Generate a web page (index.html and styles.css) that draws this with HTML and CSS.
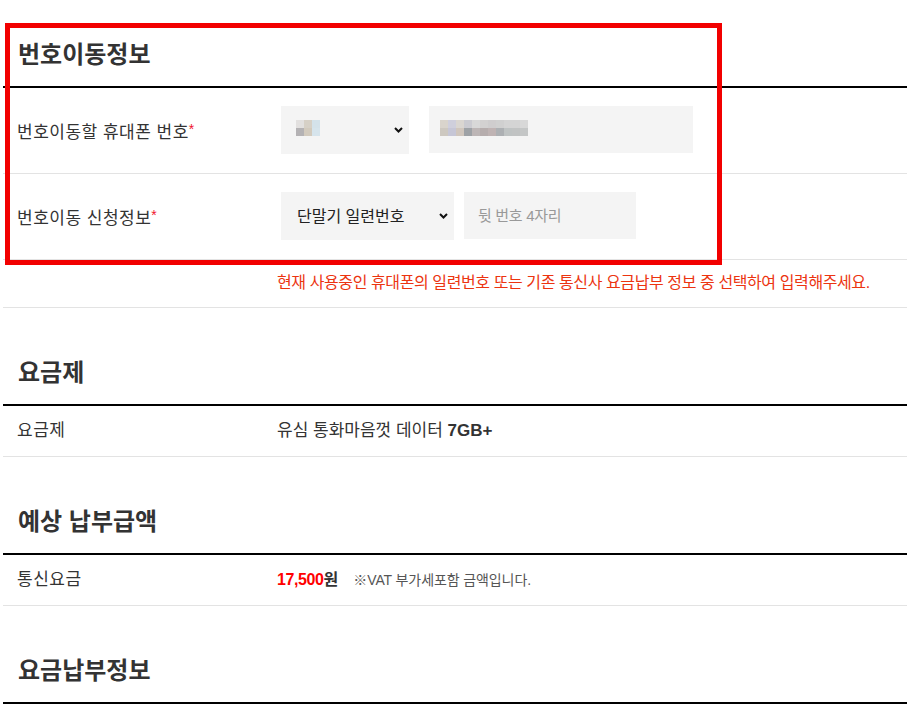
FILE: index.html
```html
<!DOCTYPE html>
<html lang="ko">
<head>
<meta charset="utf-8">
<title>번호이동정보</title>
<link rel="stylesheet" href="styles.css">
</head>
<body>
<div class="page">
  <section class="sec sec-first">
    <h2 class="sec-title">번호이동정보</h2>
    <div class="row row-form">
      <div class="label">번호이동할 휴대폰 번호<span class="req">*</span></div>
      <div class="value fields gap-20">
        <div class="select-box w-128">
          <div class="mosaic mosaic-sel"><span></span><span></span><span></span><span></span><span></span><span></span></div>
          <svg class="chev" width="9" height="6" viewBox="0 0 9 6"><path d="M1 1l3.5 3.5L8 1" fill="none" stroke="#111" stroke-width="2"/></svg>
        </div>
        <div class="input-box w-264">
          <div class="mosaic mosaic-inp"><span></span><span></span><span></span><span></span><span></span><span></span><span></span><span></span><span></span><span></span><span></span><span></span><span></span><span></span><span></span><span></span><span></span><span></span><span></span><span></span><span></span><span></span></div>
        </div>
      </div>
    </div>
    <div class="row row-form">
      <div class="label">번호이동 신청정보<span class="req">*</span></div>
      <div class="value fields gap-10">
        <div class="select-box w-173">
          <select class="sel"><option>단말기 일련번호</option><option>요금납부 정보</option></select>
          <svg class="chev" width="9" height="6" viewBox="0 0 9 6"><path d="M1 1l3.5 3.5L8 1" fill="none" stroke="#111" stroke-width="2"/></svg>
        </div>
        <input class="input-box w-172 inp" type="text" placeholder="뒷 번호 4자리">
      </div>
    </div>
    <div class="row row-notice">
      <div class="label"></div>
      <div class="value notice">현재 사용중인 휴대폰의 일련번호 또는 기존 통신사 요금납부 정보 중 선택하여 입력해주세요.</div>
    </div>
  </section>

  <section class="sec">
    <h2 class="sec-title">요금제</h2>
    <div class="row row-text">
      <div class="label">요금제</div>
      <div class="value plan">유심 통화마음껏 데이터 <b>7GB+</b></div>
    </div>
  </section>

  <section class="sec">
    <h2 class="sec-title">예상 납부급액</h2>
    <div class="row row-text">
      <div class="label">통신요금</div>
      <div class="value"><span class="price"><em>17,500</em>원</span><span class="vat">※VAT 부가세포함 금액입니다.</span></div>
    </div>
  </section>

  <section class="sec">
    <h2 class="sec-title">요금납부정보</h2>
  </section>

  <div class="highlight"></div>
</div>
</body>
</html>
```
FILE: styles.css
```css
* { box-sizing: border-box; }
html, body { margin: 0; padding: 0; background: #fff; }
body {
  font-family: "Liberation Sans", "Noto Sans CJK KR", sans-serif;
  color: #333;
  font-size: 16px;
}
.page {
  position: relative;
  padding-left: 3px;
  height: 711px;
  overflow: hidden;
}
.sec { margin: 0; }
.sec-title {
  margin: 47px 0 0;
  padding: 0 0 13px 15px;
  font-size: 24px;
  line-height: 36px;
  font-weight: 700;
  color: #333;
  border-bottom: 2px solid #000;
  letter-spacing: 0;
}
.sec-first .sec-title { margin-top: 37px; }

.row {
  display: flex;
  align-items: center;
  border-bottom: 1px solid #e3e3e3;
}
.label {
  width: 274px;
  flex: none;
  padding-left: 14px;
  font-size: 17px;
  letter-spacing: 0.5px;
  color: #333;
}
.req {
  color: #f0142e;
  font-size: 14px;
  position: relative;
  top: -4px;
  margin-left: 0;
}
.value { flex: 1; min-width: 0; }

.row-form { padding: 18px 0 19px; align-items: center; }
.fields {
  display: flex;
  align-items: flex-start;
  padding-left: 4px;
}
.gap-20 { gap: 20px; }
.gap-10 { gap: 10px; }
.w-128 { width: 128px; }
.w-173 { width: 173px; }
.w-264 { width: 264px; }
.w-172 { width: 172px; }

.select-box {
  position: relative;
  height: 48px;
  background: #f4f4f4;
}
.sel {
  appearance: none;
  -webkit-appearance: none;
  border: 0;
  outline: 0;
  background: transparent;
  width: 100%;
  height: 48px;
  padding: 0 0 0 16px;
  margin: 0;
  font-family: "Liberation Sans", "Noto Sans CJK KR", sans-serif;
  font-size: 16px;
  color: #222;
}
.chev {
  position: absolute;
  right: 6px;
  top: 21px;
}
.input-box {
  height: 47px;
  background: #f4f4f4;
  border: 0;
  outline: 0;
  margin: 0;
}
.inp {
  padding: 0 0 0 14px;
  font-family: "Liberation Sans", "Noto Sans CJK KR", sans-serif;
  font-size: 15px;
  letter-spacing: -0.3px;
  color: #333;
}
.inp::placeholder { color: #999; }

.mosaic {
  display: grid;
  grid-auto-rows: 8px;
}
.mosaic span { display: block; }
.mosaic-sel {
  grid-template-columns: repeat(3, 8px);
  padding: 14px 0 0 15px;
}
.mosaic-inp {
  grid-template-columns: repeat(11, 8px);
  padding: 14px 0 0 11px;
}
.mosaic-sel span:nth-child(1) { background: #e2e0df; }
.mosaic-sel span:nth-child(2) { background: #d6d0c6; }
.mosaic-sel span:nth-child(3) { background: #d4e2ea; }
.mosaic-sel span:nth-child(4) { background: #b4b2b4; }
.mosaic-sel span:nth-child(5) { background: #d2cabd; }
.mosaic-sel span:nth-child(6) { background: #d6e4ec; }

.mosaic-inp span:nth-child(1) { background: #d9d4cc; }
.mosaic-inp span:nth-child(2) { background: #cfcfdc; }
.mosaic-inp span:nth-child(3) { background: #dad6d1; }
.mosaic-inp span:nth-child(4) { background: #cbcbd1; }
.mosaic-inp span:nth-child(5) { background: #d8d8d8; }
.mosaic-inp span:nth-child(6) { background: #d3d1d1; }
.mosaic-inp span:nth-child(7) { background: #cfcdce; }
.mosaic-inp span:nth-child(8) { background: #d0d0d0; }
.mosaic-inp span:nth-child(9) { background: #d4d4d4; }
.mosaic-inp span:nth-child(10) { background: #d4d4d4; }
.mosaic-inp span:nth-child(11) { background: #d8d8d8; }
.mosaic-inp span:nth-child(12) { background: #cdc8c0; }
.mosaic-inp span:nth-child(13) { background: #c6c6d6; }
.mosaic-inp span:nth-child(14) { background: #d0c6bd; }
.mosaic-inp span:nth-child(15) { background: #9ea2a6; }
.mosaic-inp span:nth-child(16) { background: #bdb6b6; }
.mosaic-inp span:nth-child(17) { background: #b6adad; }
.mosaic-inp span:nth-child(18) { background: #bfb3b3; }
.mosaic-inp span:nth-child(19) { background: #adb0b3; }
.mosaic-inp span:nth-child(20) { background: #bfc3c3; }
.mosaic-inp span:nth-child(21) { background: #c1c3c3; }
.mosaic-inp span:nth-child(22) { background: #c4c6c6; }

.row-notice { padding: 12px 0 13px; }
.notice {
  font-size: 16px;
  line-height: 22px;
  letter-spacing: -0.4px;
  color: #ec3410;
  white-space: nowrap;
}

.row-text { padding: 13px 0 13px; }
.row-text .label, .row-text .value { line-height: 24px; }
.plan {
  font-size: 17px;
  color: #333;
}
.plan b { font-weight: 700; }
.price {
  font-size: 16px;
  font-weight: 700;
  color: #333;
}
.price em {
  font-style: normal;
  color: #ff0000;
  letter-spacing: -0.4px;
}
.vat {
  margin-left: 15px;
  font-size: 14px;
  color: #555;
  letter-spacing: -0.1px;
}

.highlight {
  position: absolute;
  left: 5px;
  top: 23px;
  width: 717px;
  height: 242px;
  border: 5px solid #f20000;
  pointer-events: none;
}
```
